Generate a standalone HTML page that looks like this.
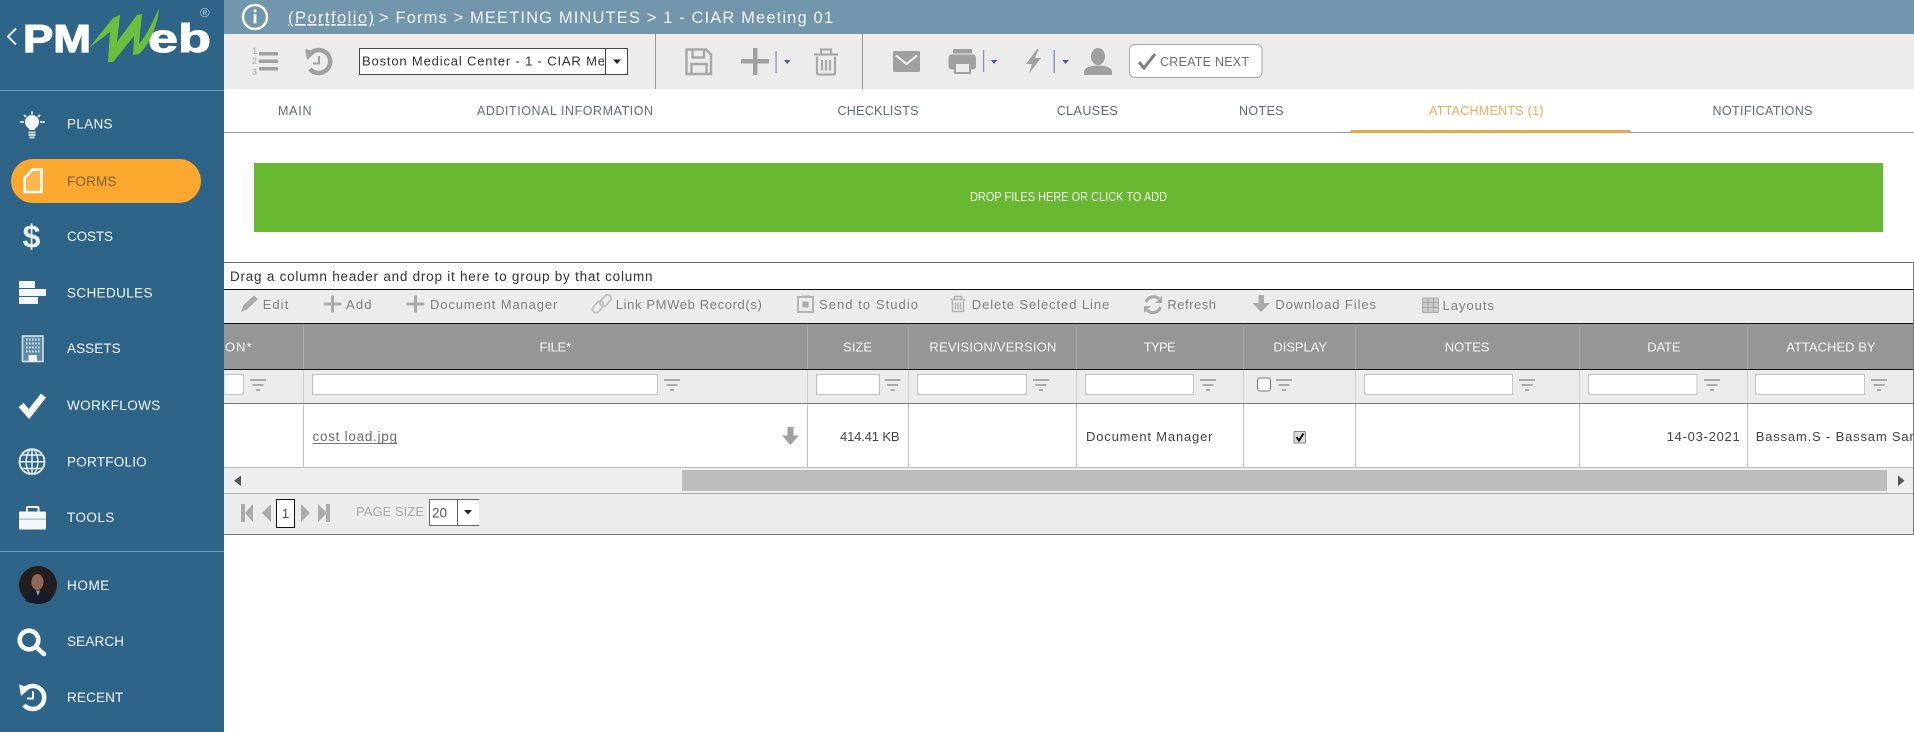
<!DOCTYPE html>
<html lang="en"><head><meta charset="utf-8"><title>PMWeb - Meeting Minutes</title>
<style>
html,body{margin:0;padding:0;background:#fff;width:1914px;height:732px;overflow:hidden}
svg{display:block}
text{font-family:"Liberation Sans",sans-serif}
.s{font-size:13.5px;fill:#f4f8fb}
.t{font-size:12.5px;fill:#5f6e7b}
.g{font-size:13px;fill:#808080}
.h{font-size:13px;fill:#f5f5f5}
.d{font-size:13px;fill:#444}
.ic{fill:#a0a0a0}
.il{fill:#aaa}
.f{fill:#fff;stroke:#c4c4c4;stroke-width:1}
</style></head><body>
<svg width="1914" height="732" viewBox="0 0 1914 732" xmlns="http://www.w3.org/2000/svg">
<defs>
<clipPath id="cb"><rect x="360" y="49" width="244" height="24"/></clipPath>
<clipPath id="cg"><rect x="224" y="262" width="1689" height="272"/></clipPath>
</defs>
<rect width="1914" height="732" fill="#fff"/>

<!-- top bar -->
<rect x="224" y="0" width="1690" height="34" fill="#7296ab"/>
<rect x="224" y="34" width="1690" height="55" fill="#ececec"/>
<rect x="224" y="36" width="1690" height="4" fill="#f5ebe7"/>
<circle cx="255" cy="17" r="12" fill="none" stroke="#fff" stroke-width="2.4"/>
<rect x="253.6" y="14" width="2.8" height="9.5" fill="#fff"/><rect x="253.6" y="9.5" width="2.8" height="2.8" fill="#fff"/>
<text x="288" y="23" font-size="16.5" fill="#f2f6f8" text-decoration="underline" textLength="86">(Portfolio)</text>
<text x="379" y="23" font-size="16.5" fill="#f2f6f8" textLength="454">&gt; Forms &gt; MEETING MINUTES &gt; 1 - CIAR Meeting 01</text>

<!-- toolbar -->
<text x="252" y="54" font-size="9" font-weight="bold" fill="#bbb">1</text>
<text x="252" y="64" font-size="9" font-weight="bold" fill="#bbb">2</text>
<text x="252" y="75" font-size="9" font-weight="bold" fill="#bbb">3</text>
<rect x="259" y="52" width="19" height="3.5" class="ic"/><rect x="259" y="59.5" width="19" height="3.5" class="ic"/><rect x="259" y="67" width="19" height="3.5" class="ic"/>
<path d="M310 54A11.5 11.5 0 1 1 310 69" fill="none" stroke="#a0a0a0" stroke-width="4.5"/>
<path d="M305 49L316 52 307 60Z" class="ic"/>
<path d="M319 56V63.5H313" fill="none" stroke="#a0a0a0" stroke-width="2"/>

<rect x="359.5" y="48.5" width="268" height="26" fill="#fff" stroke="#444"/>
<line x1="605.5" y1="48.5" x2="605.5" y2="74.5" stroke="#444"/>
<path d="M613 59.5h8l-4 4.500z" fill="#222"/>
<text x="362" y="65.500" font-size="13" fill="#333" textLength="243" clip-path="url(#cb)">Boston Medical Center - 1 - CIAR Me</text>
<rect x="655" y="34" width="1" height="55" fill="#999"/>
<rect x="862" y="34" width="1" height="55" fill="#999"/>

<path d="M686.500 49.500H706L711 54.500V74H686.500Z M692.500 49.500V57.500H704V49.500 M691.500 74V64H706.500V74" fill="none" stroke="#a8a8a8" stroke-width="2.400"/>
<rect x="741" y="59" width="28" height="4.500" class="ic"/><rect x="753" y="48" width="4.500" height="27" class="ic"/>
<rect x="775.500" y="51" width="1.200" height="22" fill="#8a8fa6"/><path d="M784 60h6.500l-3.250 4z" fill="#4a5a9a"/>
<path d="M814 54.500H838M821 54V49.500H831V54M817 56.500V72.500Q817 74.500 819 74.500H833Q835 74.500 835 72.500V56.500M822 60V70.500M826 60V70.500M830 60V70.500" fill="none" stroke="#a8a8a8" stroke-width="2.200"/>
<rect x="893" y="51" width="27" height="21" rx="1" class="ic"/>
<path d="M896 55.500L906.500 64 917 55.500" fill="none" stroke="#ececec" stroke-width="2.200"/>
<rect x="953" y="49" width="19" height="4.500" class="ic"/>
<rect x="948.500" y="54.500" width="27.500" height="15" rx="3" class="ic"/>
<rect x="955" y="63" width="15" height="10" fill="#ececec" stroke="#a0a0a0" stroke-width="2"/>
<rect x="983" y="50" width="1.200" height="22" fill="#8a8fa6"/><path d="M990.800 60h6.500l-3.250 4z" fill="#4a5a9a"/>
<path d="M1037 49L1026 64H1032L1029 73.500 1041 58H1035L1038.500 49Z" class="ic"/>
<rect x="1053.500" y="50" width="1.400" height="23" fill="#8a8fa6"/><path d="M1062.300 60h6.500l-3.250 4z" fill="#4a5a9a"/>
<ellipse cx="1098" cy="56.500" rx="7" ry="8.500" class="ic"/>
<path d="M1084 75V72C1084 67 1092 65.500 1098 65.500 1104 65.500 1112 67 1112 72V75Z" class="ic"/>
<rect x="1129.500" y="44.500" width="132.500" height="33" rx="5" fill="#fff" stroke="#aaa"/>
<path d="M1139 62L1144 68 1155 54" fill="none" stroke="#808080" stroke-width="3"/>
<text x="1160" y="66" font-size="12.500" fill="#707070" textLength="89">CREATE NEXT</text>

<!-- tabs -->
<rect x="224" y="132" width="1690" height="1" fill="#999"/>
<rect x="1350.500" y="130" width="280" height="2.800" fill="#f0a94a"/>
<text x="278" y="115" class="t" textLength="33.500">MAIN</text>
<text x="477" y="115" class="t" textLength="176">ADDITIONAL INFORMATION</text>
<text x="837.500" y="115" class="t" textLength="81">CHECKLISTS</text>
<text x="1056.700" y="115" class="t" textLength="61">CLAUSES</text>
<text x="1239" y="115" class="t" textLength="44.500">NOTES</text>
<text x="1429" y="115" class="t" style="fill:#eeae58" textLength="114.500">ATTACHMENTS (1)</text>
<text x="1712.500" y="115" class="t" textLength="100">NOTIFICATIONS</text>

<!-- green drop zone -->
<rect x="254" y="163" width="1629" height="69" fill="#69b831"/>
<text x="970" y="201" font-size="13" fill="#f2f8e8" textLength="197" lengthAdjust="spacingAndGlyphs">DROP FILES HERE OR CLICK TO ADD</text>

<!-- grid -->
<rect x="224" y="290" width="1689" height="33" fill="#ececec"/>
<rect x="224" y="324" width="1689" height="45" fill="#969696"/>
<rect x="224" y="370" width="1689" height="33" fill="#ececec"/>
<rect x="224" y="468" width="1689" height="25" fill="#eee"/>
<rect x="224" y="494" width="1689" height="40" fill="#ececec"/>
<rect x="224" y="262" width="1689" height="1" fill="#666"/>
<rect x="224" y="289" width="1689" height="1" fill="#111"/>
<rect x="224" y="323" width="1689" height="1" fill="#111"/>
<rect x="224" y="369" width="1689" height="1" fill="#111"/>
<rect x="224" y="403" width="1689" height="1" fill="#777"/>
<rect x="224" y="467" width="1689" height="1" fill="#bbb"/>
<rect x="224" y="493" width="1689" height="1" fill="#aaa"/>
<rect x="224" y="534" width="1689" height="1" fill="#777"/>
<rect x="1913" y="262" width="1" height="273" fill="#777"/>
<text x="230" y="281" font-size="13.500" fill="#333" textLength="422.500">Drag a column header and drop it here to group by that column</text>

<!-- grid toolbar -->
<path d="M241 312L243.500 305 254 295.500 258 299 247 309.500Z" class="il"/>
<text x="262.700" y="309" class="g" textLength="25.500">Edit</text>
<path d="M323.600 302.500h17.800v3h-17.800z M331 295.500h3v17h-3z" class="il"/>
<text x="346" y="309" class="g" textLength="25.500">Add</text>
<path d="M406.600 302.500h17.800v3h-17.800z M414 295.500h3v17h-3z" class="il"/>
<text x="430" y="309" class="g" textLength="127.300">Document Manager</text>
<rect x="-3.500" y="-6.500" width="7" height="13" rx="3.500" transform="translate(598 307) rotate(42)" fill="none" stroke="#c0c0c0" stroke-width="1.800"/>
<rect x="-3.500" y="-6.500" width="7" height="13" rx="3.500" transform="translate(605.500 300.500) rotate(42)" fill="none" stroke="#c0c0c0" stroke-width="1.800"/>
<text x="615.800" y="309" class="g" textLength="146">Link PMWeb Record(s)</text>
<rect x="798" y="297" width="15" height="15" fill="none" stroke="#b4b4b4" stroke-width="2"/><rect x="802.500" y="301.500" width="6" height="6" class="il"/><rect x="801" y="295.500" width="9" height="2.500" fill="#b4b4b4"/>
<text x="819" y="309" class="g" textLength="99">Send to Studio</text>
<path d="M950.500 299.500H965.500M954.500 299V296.500H961.500V299M952.500 300.500V311.500H963.500V300.500M955.500 302.500V309.500M958 302.500V309.500M960.500 302.500V309.500" fill="none" stroke="#b4b4b4" stroke-width="1.500"/>
<text x="971.800" y="309" class="g" textLength="137.400">Delete Selected Line</text>
<path d="M1146 302A8 8 0 0 1 1159 299M1160.500 307A8 8 0 0 1 1147 310" fill="none" stroke="#aaa" stroke-width="3"/>
<path d="M1162 296V303H1155Z M1144 313V306H1151Z" class="il"/>
<text x="1167.400" y="309" class="g" textLength="48.600">Refresh</text>
<path d="M1258.500 295H1264V303H1270L1261 312 1252.400 303H1258.500Z" class="il"/>
<text x="1275.300" y="309" class="g" textLength="100.700">Download Files</text>
<rect x="1422.500" y="298" width="16" height="14.500" rx="1" fill="#ccc" stroke="#aaa"/>
<path d="M1428 298V312.500M1433.500 298V312.500M1422.500 302.500H1438.500M1422.500 307.500H1438.500" stroke="#999" stroke-width="0.800" fill="none"/>
<text x="1442.500" y="310" class="g" textLength="51.500">Layouts</text>

<!-- column dividers -->
<path d="M303.500 327V369M807.500 327V369M908.500 327V369M1076.500 327V369M1243.500 327V369M1355.500 327V369M1579.500 327V369M1747.500 327V369" stroke="#aaa"/>
<path d="M303.500 370V403M807.500 370V403M908.500 370V403M1076.500 370V403M1243.500 370V403M1355.500 370V403M1579.500 370V403M1747.500 370V403" stroke="#d0d0d0"/>
<path d="M303.500 404V468M807.500 404V468M908.500 404V468M1076.500 404V468M1243.500 404V468M1355.500 404V468M1579.500 404V468M1747.500 404V468" stroke="#c4c4c4"/>

<!-- headers -->
<text x="225" y="351.500" class="h" textLength="26.500">ON*</text>
<text x="539.500" y="351.500" class="h" textLength="31.500">FILE*</text>
<text x="843" y="351.500" class="h" textLength="29">SIZE</text>
<text x="929.400" y="351.500" class="h" textLength="127">REVISION/VERSION</text>
<text x="1143.700" y="351.500" class="h" textLength="32">TYPE</text>
<text x="1273.400" y="351.500" class="h" textLength="53.600">DISPLAY</text>
<text x="1444.700" y="351.500" class="h" textLength="44.700">NOTES</text>
<text x="1647.300" y="351.500" class="h" textLength="33.200">DATE</text>
<text x="1786.200" y="351.500" class="h" textLength="89.400">ATTACHED BY</text>

<!-- filters -->
<rect x="224" y="374.500" width="19.500" height="20" class="f"/>
<rect x="312.500" y="374.500" width="345" height="20" class="f"/>
<rect x="816.500" y="374.500" width="63" height="20" class="f"/>
<rect x="917.500" y="374.500" width="109" height="20" class="f"/>
<rect x="1085.500" y="374.500" width="108" height="20" class="f"/>
<rect x="1257.500" y="378" width="13" height="13" rx="2.500" fill="#fff" stroke="#777"/>
<rect x="1364.500" y="374.500" width="148" height="20" class="f"/>
<rect x="1588.500" y="374.500" width="108.500" height="20" class="f"/>
<rect x="1755.500" y="374.500" width="109" height="20" class="f"/>
<path transform="translate(258 0)" d="M-8 379h16v2h-16z M-5.500 384h11v2h-11z M-2 389h4v2h-4z" class="il"/>
<path transform="translate(672 0)" d="M-8 379h16v2h-16z M-5.500 384h11v2h-11z M-2 389h4v2h-4z" class="il"/>
<path transform="translate(892.600 0)" d="M-8 379h16v2h-16z M-5.500 384h11v2h-11z M-2 389h4v2h-4z" class="il"/>
<path transform="translate(1041 0)" d="M-8 379h16v2h-16z M-5.500 384h11v2h-11z M-2 389h4v2h-4z" class="il"/>
<path transform="translate(1208 0)" d="M-8 379h16v2h-16z M-5.500 384h11v2h-11z M-2 389h4v2h-4z" class="il"/>
<path transform="translate(1284 0)" d="M-8 379h16v2h-16z M-5.500 384h11v2h-11z M-2 389h4v2h-4z" class="il"/>
<path transform="translate(1527 0)" d="M-8 379h16v2h-16z M-5.500 384h11v2h-11z M-2 389h4v2h-4z" class="il"/>
<path transform="translate(1712 0)" d="M-8 379h16v2h-16z M-5.500 384h11v2h-11z M-2 389h4v2h-4z" class="il"/>
<path transform="translate(1879 0)" d="M-8 379h16v2h-16z M-5.500 384h11v2h-11z M-2 389h4v2h-4z" class="il"/>

<!-- row -->
<text x="312.500" y="441" font-size="13.500" fill="#6e6e6e" textLength="84.500">cost load.jpg</text>
<rect x="312.500" y="443" width="84.500" height="1" fill="#777"/>
<path d="M787.500 427H793.500V435.500H799L790.500 445 782 435.500H787.500Z" class="ic"/>
<text x="840" y="441" class="d" textLength="59.500">414.41 KB</text>
<text x="1086" y="441" class="d" textLength="126.500">Document Manager</text>
<rect x="1294" y="431.500" width="11.500" height="11.500" rx="1" fill="#ddd" stroke="#888"/>
<path d="M1296.500 437L1299 440.500 1303.500 433.500" fill="none" stroke="#111" stroke-width="2"/>
<text x="1666.700" y="441" class="d" textLength="73">14-03-2021</text>
<text x="1755.700" y="441" class="d" textLength="161" clip-path="url(#cg)">Bassam.S - Bassam San</text>

<!-- scrollbar -->
<rect x="682" y="470" width="1205" height="21" fill="#bdbdbd"/>
<path d="M241 475.500V486L234 480.700Z M1898 475.500V486L1904.500 480.700Z" fill="#555"/>

<!-- pager -->
<path d="M241 504H245V522H241Z M253 504V522L245 513Z M271 504V522L262 513Z M301 504V522L310 513Z M318 504V522L327 513Z M326 504H330V522H326Z" class="il"/>
<rect x="276.500" y="499.500" width="18" height="28" fill="#fff" stroke="#111"/>
<text x="285.500" y="518" font-size="13" fill="#3a5a50" text-anchor="middle">1</text>
<text x="356" y="516" font-size="13" fill="#aaa" textLength="68">PAGE SIZE</text>
<path d="M479 499.500H429.500V525.500H479" fill="#fff" stroke="#666"/>
<line x1="457.500" y1="499.500" x2="457.500" y2="525.500" stroke="#666"/>
<text x="432" y="517.500" font-size="13.500" fill="#555" textLength="15">20</text>
<path d="M464 510h8l-4 4.500z" fill="#222"/>

<!-- sidebar -->
<rect x="0" y="0" width="224" height="732" fill="#2f6489"/>
<rect x="0" y="90" width="224" height="1" fill="#6f9dbb"/>
<rect x="0" y="551" width="224" height="1" fill="#6f9dbb"/>
<polyline points="16,28.500 8,36.500 16,44.500" fill="none" stroke="#e4edf3" stroke-width="2"/>
<text x="23" y="52" font-size="39" font-weight="bold" fill="#fff" stroke="#fff" stroke-width="1.200" textLength="68" lengthAdjust="spacingAndGlyphs">PM</text>
<text x="148" y="52" font-size="40" font-weight="bold" fill="#fff" stroke="#fff" stroke-width="1" textLength="63" lengthAdjust="spacingAndGlyphs">eb</text>
<path d="M89 48L113 18 120 15 117 42 137 15 142 14 139 44C146 36 153 22 159 8 158 24 150 44 139 54L133 55 134 36 113 62 108 62 110 32Z" fill="#6cbf3c"/>
<text x="200" y="17" font-size="13" fill="#b8ccd9">®</text>

<!-- sidebar items -->
<circle cx="32" cy="122" r="7" fill="#f6fafc"/>
<path d="M28 124H36L35 130H29Z" fill="#f6fafc"/>
<rect x="28.500" y="131.500" width="7" height="1.800" fill="#dce8f0"/><rect x="28.500" y="134" width="7" height="1.800" fill="#dce8f0"/><rect x="29.500" y="136.500" width="5" height="1.800" fill="#dce8f0"/>
<path d="M20 122H24M40 122H45M32 111.500V114.500M24 115L26 117M40 115L38 117" stroke="#dce8f0" stroke-width="1.800" fill="none"/>
<text x="67" y="128.500" class="s" textLength="45.500">PLANS</text>

<rect x="11" y="159" width="190" height="44" rx="22" fill="#fca72e"/>
<path d="M24.500 178L32.500 169.500H41.500V192H24.500Z" fill="#fcb64e" stroke="#fff" stroke-width="2.600"/>
<text x="67" y="186" class="s" style="fill:#7a6238" textLength="49.500">FORMS</text>

<text x="31.500" y="247.500" font-size="32" font-weight="bold" fill="#eaf2f7" text-anchor="middle">$</text>
<text x="67" y="241" class="s" textLength="46">COSTS</text>

<rect x="19" y="281" width="16" height="7" fill="#f4f8fb"/><rect x="19" y="289" width="27" height="7" fill="#f4f8fb"/><rect x="19" y="297" width="19" height="7" fill="#f4f8fb"/>
<text x="67" y="297.500" class="s" textLength="85.500">SCHEDULES</text>

<rect x="22.500" y="336" width="20.500" height="25.500" fill="#5e8aa8" stroke="#dbe8f1" stroke-width="1.500"/>
<path d="M26 339.500H40M26 343.500H40M26 347.500H40M26 351.500H40" stroke="#dbe8f1" stroke-width="2" stroke-dasharray="1.600 1.400" fill="none"/>
<rect x="28.500" y="355" width="8.500" height="6.500" fill="#f4f8fb"/>
<text x="67" y="353" class="s" textLength="53.700">ASSETS</text>

<polyline points="21,405 29,414 43.500,395.500" fill="none" stroke="#f6fafc" stroke-width="6.500"/>
<text x="67" y="410" class="s" textLength="93.300">WORKFLOWS</text>

<circle cx="32" cy="461.700" r="12.500" fill="none" stroke="#e8f0f5" stroke-width="1.800"/>
<ellipse cx="32" cy="461.700" rx="5.800" ry="12.500" fill="none" stroke="#e8f0f5" stroke-width="1.500"/>
<path d="M32 449V474M19.500 461.700H44.500M21.500 455H42.500M21.500 468.500H42.500" stroke="#e8f0f5" stroke-width="1.500" fill="none"/>
<text x="67" y="466.500" class="s" textLength="79.700">PORTFOLIO</text>

<rect x="27" y="507" width="11.500" height="6" rx="1" fill="none" stroke="#f4f8fb" stroke-width="2"/>
<rect x="19" y="511.500" width="27" height="18" rx="1" fill="#f4f8fb"/>
<rect x="19" y="518.500" width="27" height="1.200" fill="#9db9cc"/>
<text x="67" y="522" class="s" textLength="47.300">TOOLS</text>

<circle cx="38" cy="585" r="19" fill="#231e1e"/>
<ellipse cx="37.500" cy="582" rx="6" ry="8" fill="#8f6a58"/>
<path d="M31 578Q37 570 44 578L44 574Q38 569 31 574Z" fill="#2a2420"/>
<path d="M25 600.500Q27 592 35 590L38 594 41 590Q49 592 51 600 45 604 38 604 31 604 25 600.500Z" fill="#151a2c"/>
<path d="M36 590.500L38 596 40 590.500Z" fill="#9aa0aa"/>
<text x="67" y="590" class="s" textLength="42.300">HOME</text>

<circle cx="29" cy="640" r="9.300" fill="none" stroke="#f6fafc" stroke-width="4.600"/>
<line x1="36.500" y1="647.500" x2="44" y2="654" stroke="#f6fafc" stroke-width="4.600" stroke-linecap="round"/>
<text x="67" y="646" class="s" textLength="57">SEARCH</text>

<path d="M24 690A11.500 11.500 0 1 1 24 705" fill="none" stroke="#f6fafc" stroke-width="4.500"/>
<path d="M19 684.500L30.500 688 21 696Z" fill="#f6fafc"/>
<path d="M33 691V698.500H27" fill="none" stroke="#f6fafc" stroke-width="2"/>
<text x="67" y="702" class="s" textLength="56.300">RECENT</text>
</svg>
</body></html>
